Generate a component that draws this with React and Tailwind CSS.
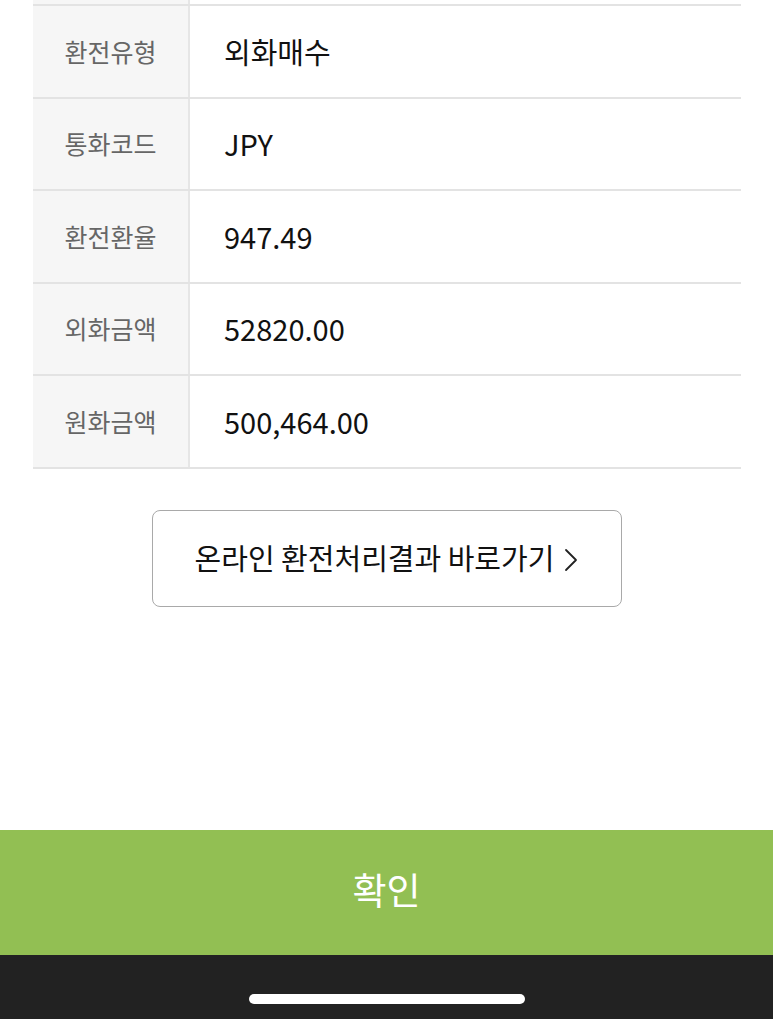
import React from 'react';

const rows = [
  { label: '환전유형', value: '외화매수' },
  { label: '통화코드', value: 'JPY' },
  { label: '환전환율', value: '947.49' },
  { label: '외화금액', value: '52820.00' },
  { label: '원화금액', value: '500,464.00' },
];

const font = { fontFamily: '"Noto Sans CJK KR", "Noto Sans", sans-serif' };

const App = () => {
  return (
    <div className="w-[773px] h-[1019px] bg-white flex flex-col overflow-hidden" style={font}>
      {/* Result table */}
      <div className="pl-[33px] pr-[32px]">
        {/* cut-off row above */}
        <div className="flex h-[6px] border-b-2 border-[#e3e3e3]">
          <div className="w-[157px] bg-[#f6f6f6] border-r-2 border-[#e6e6e6]"></div>
          <div className="flex-1"></div>
        </div>
        {rows.map((row) => (
          <div key={row.label} className="flex h-[92.5px] border-b-2 border-[#e3e3e3]">
            <div className="w-[157px] bg-[#f6f6f6] border-r-2 border-[#e6e6e6] flex items-center justify-center text-[25px] text-[#666666]">
              {row.label}
            </div>
            <div className="flex-1 flex items-center pl-[34px] text-[29px] text-[#111111]">
              {row.value}
            </div>
          </div>
        ))}
      </div>

      {/* Link button */}
      <div className="flex justify-center mt-[41px]">
        <button className="w-[470px] h-[97px] rounded-[8px] border-[1.5px] border-[#a9a9a9] bg-white flex items-center justify-center gap-[10px] text-[29px] text-[#111111]">
          <span>온라인 환전처리결과 바로가기</span>
          <svg width="14" height="24" viewBox="0 0 14 24" fill="none" className="mt-[4px]">
            <path d="M2 2 L12 12 L2 22" stroke="#222222" strokeWidth="1.8" strokeLinecap="round" strokeLinejoin="round" />
          </svg>
        </button>
      </div>

      <div className="flex-1"></div>

      {/* Confirm */}
      <button className="h-[125px] w-full bg-[#92bf53] flex items-center justify-center text-[37px] text-white pb-[6px]">
        확인
      </button>

      {/* Navigation bar */}
      <div className="h-[64px] bg-[#222222] flex items-start justify-center pt-[39px]">
        <div className="w-[276px] h-[10px] rounded-full bg-white"></div>
      </div>
    </div>
  );
};

export default App;
